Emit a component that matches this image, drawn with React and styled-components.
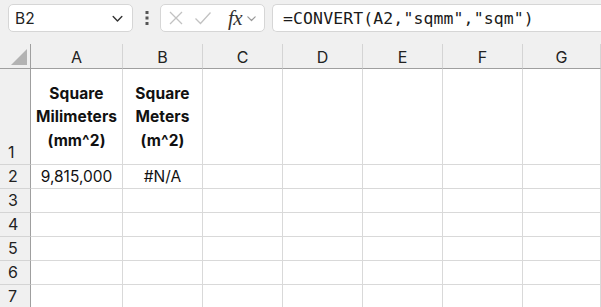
import React from 'react'
import styled, { createGlobalStyle } from 'styled-components'

const GlobalStyle = createGlobalStyle`
  html, body {
    margin: 0;
    padding: 0;
    background: #f0f0f0;
    overflow: hidden;
  }
  * { box-sizing: border-box; }
`;

const Window = styled.div`
  width: 601px;
  height: 307px;
  overflow: hidden;
  font-family: Inter, "Liberation Sans", sans-serif;
  color: #1f1f1f;
`;

const Toolbar = styled.div`
  display: flex;
  align-items: center;
  height: 44px;
  padding: 0 0 8px 8px;
  background: #f0f0f0;
`;

const Box = styled.div`
  display: flex;
  align-items: center;
  height: 28px;
  background: #fff;
  border: 1px solid #d6d6d6;
  border-radius: 5px;
  width: ${p => p.$w ? `${p.$w}px` : 'auto'};
  flex: ${p => p.$grow ? 1 : 'none'};
  ${p => p.$grow && 'border-right: none; border-radius: 5px 0 0 5px;'}
`;

const NameText = styled.span`
  flex: 1;
  padding-left: 6px;
  font-size: 15.5px;
  color: #222;
`;

const Dots = styled.div`
  width: 27px;
  display: flex;
  justify-content: center;
`;

const FormulaText = styled.span`
  padding-left: 10px;
  font-family: "DejaVu Sans Mono", "Liberation Mono", monospace;
  font-size: 16.5px;
  color: #1a1a1a;
  white-space: nowrap;
  letter-spacing: 0.1px;
`;

const Fx = styled.span`
  font-family: "Liberation Serif", serif;
  font-style: italic;
  font-size: 21px;
  color: #333;
  margin-left: 16px;
  letter-spacing: -0.5px;
`;

const Grid = styled.div`
  display: grid;
  grid-template-columns: 31px 92px 80px 80px 80px 80px 80px 1fr;
  grid-template-rows: 25px 96px repeat(6, 24px);
  background: #fff;
`;

const Cell = styled.div`
  border-right: 1px solid #d9d9d9;
  border-bottom: 1px solid #d9d9d9;
  display: flex;
  justify-content: center;
  align-items: flex-end;
  font-size: 15.5px;
  line-height: 23px;
  color: #111;
  overflow: hidden;
`;

const ColHead = styled(Cell)`
  background: #f0f0f0;
  border-bottom: 1px solid #9f9f9f;
  border-right: 1px solid #d4d4d4;
  align-items: center;
  padding-top: 2px;
  color: #222;
  font-size: 16px;
`;

const Corner = styled(ColHead)`
  position: relative;
  border-right: 1px solid #9f9f9f;
`;

const Triangle = styled.div`
  position: absolute;
  right: 3px;
  bottom: 3px;
  width: 0;
  height: 0;
  border-left: 16px solid transparent;
  border-bottom: 16px solid #b3b3b3;
`;

const RowHead = styled(Cell)`
  background: #f0f0f0;
  border-right: 1px solid #9f9f9f;
  border-bottom: 1px solid #d4d4d4;
  justify-content: flex-start;
  padding-left: 8px;
  color: #222;
  font-size: 16px;
`;

const HeaderText = styled.div`
  display: flex;
  flex-direction: column;
  align-items: center;
  font-weight: 700;
  font-size: 15.5px;
  line-height: 23.5px;
  padding-bottom: 12px;
  letter-spacing: 0.1px;
`;

const Value = styled.span`
  line-height: 23px;
`;

const columns = ['A', 'B', 'C', 'D', 'E', 'F', 'G'];

const rows = [
  [
    <HeaderText key="a"><span>Square</span><span>Milimeters</span><span>(mm^2)</span></HeaderText>,
    <HeaderText key="b"><span>Square</span><span>Meters</span><span>(m^2)</span></HeaderText>,
  ],
  [<Value key="a">9,815,000</Value>, <Value key="b">#N/A</Value>],
  [], [], [], [], [],
];

const Chevron = ({ size = 12, color = '#444' }) => (
  <svg width={size} height={size} viewBox="0 0 12 12">
    <path d="M2 4.2 L6 8.2 L10 4.2" fill="none" stroke={color} strokeWidth="1.3" strokeLinecap="round" strokeLinejoin="round" />
  </svg>
);

function App() {
  return (
    <>
      <GlobalStyle />
      <Window>
        <Toolbar>
          <Box $w={125}>
            <NameText>B2</NameText>
            <span style={{ marginRight: 8, display: 'flex' }}><Chevron size={13} color="#333" /></span>
          </Box>
          <Dots>
            <svg width="4" height="14" viewBox="0 0 4 14">
              <rect x="0.5" y="0" width="3" height="3" fill="#555" />
              <rect x="0.5" y="5.5" width="3" height="3" fill="#555" />
              <rect x="0.5" y="11" width="3" height="3" fill="#555" />
            </svg>
          </Dots>
          <Box $w={105}>
            <svg width="16" height="16" viewBox="0 0 16 16" style={{ marginLeft: 7 }}>
              <path d="M2 2 L14 14 M14 2 L2 14" stroke="#c2c2c2" strokeWidth="1.3" fill="none" />
            </svg>
            <svg width="18" height="16" viewBox="0 0 18 16" style={{ marginLeft: 10 }}>
              <path d="M1.5 8.5 L6.5 13.5 L16.5 2.5" stroke="#c2c2c2" strokeWidth="1.3" fill="none" />
            </svg>
            <Fx>fx</Fx>
            <span style={{ marginLeft: 4, display: 'flex' }}><Chevron size={11} color="#999" /></span>
          </Box>
          <span style={{ width: 7 }} />
          <Box $grow>
            <FormulaText>=CONVERT(A2,"sqmm","sqm")</FormulaText>
          </Box>
        </Toolbar>
        <Grid>
          <Corner><Triangle /></Corner>
          {columns.map(c => <ColHead key={c}>{c}</ColHead>)}
          {rows.map((cells, r) => (
            <React.Fragment key={r}>
              <RowHead>{r + 1}</RowHead>
              {columns.map((c, i) => <Cell key={c}>{cells[i] || null}</Cell>)}
            </React.Fragment>
          ))}
        </Grid>
      </Window>
    </>
  );
}

export default App
